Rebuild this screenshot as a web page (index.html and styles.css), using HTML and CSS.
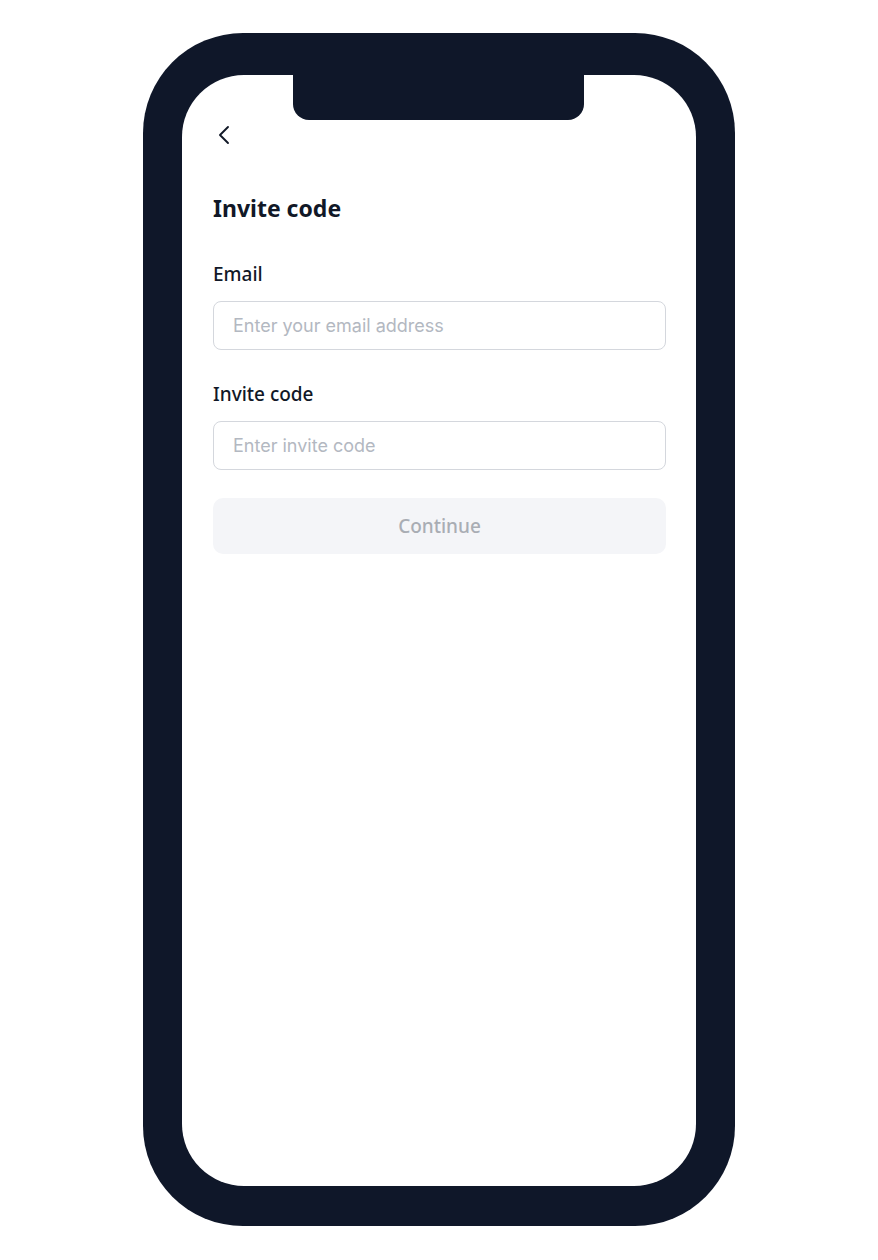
FILE: index.html
```html
<!DOCTYPE html>
<html>

<head>
  <meta http-equiv="Content-Type" content="text/html; charset=UTF-8" />
  <meta name="viewport" content="width=device-width,initial-scale=1.0" />
  <link rel="stylesheet" href="styles.css">
</head>

<body>
  <div class="phone">
    <div class="screen">
      <div class="notch"></div>
      <div class="content">
        <button class="back-btn" aria-label="Back">
          <svg width="14" height="20" viewBox="0 0 14 20" fill="none">
            <path d="M11 2 L3 10 L11 18" stroke="#111827" stroke-width="1.9" stroke-linecap="round" stroke-linejoin="round" />
          </svg>
        </button>
        <h1 class="title">Invite code</h1>
        <form class="form">
          <label class="field">
            <span class="field-label">Email</span>
            <input class="field-input" type="email" placeholder="Enter your email address">
          </label>
          <label class="field">
            <span class="field-label">Invite code</span>
            <input class="field-input" type="text" placeholder="Enter invite code">
          </label>
          <button class="continue-btn" type="button" disabled>Continue</button>
        </form>
      </div>
    </div>
  </div>
</body>

</html>
```

FILE: styles.css
```css
html {
  height: 100%;
}

body {
  margin: 0;
  background-color: #fff;
  font-family: "Noto Sans", "Open Sans", sans-serif;
  color: #111827;
}

.phone {
  width: 592px;
  height: 1193px;
  margin: 33px auto 0 auto;
  box-sizing: border-box;
  padding: 42px 39px 40px 39px;
  background-color: #0f1729;
  border-radius: 100px;
}

.screen {
  position: relative;
  height: 100%;
  background-color: #fff;
  border-radius: 62px;
  overflow: hidden;
}

/* notch sits over the screen */
.notch {
  position: absolute;
  top: 0;
  left: 111px;
  width: 291px;
  height: 45px;
  background-color: #0f1729;
  border-radius: 0 0 16px 16px;
}

.content {
  padding: 50px 30px 0 31px;
}

.back-btn {
  display: flex;
  padding: 0;
  margin: 0 0 0 4px;
  border: none;
  background: none;
  height: 20px;
}

.title {
  margin: 48px 0 0 0;
  font-size: 23px;
  font-weight: 700;
  line-height: 30px;
}

.form {
  margin-top: 38px;
  display: flex;
  flex-direction: column;
}

.field {
  display: flex;
  flex-direction: column;
  margin-bottom: 31px;
}

.field-label {
  font-size: 19px;
  font-weight: 500;
  line-height: 26px;
  margin-bottom: 14px;
}

.field-input {
  height: 49px;
  box-sizing: border-box;
  border: 1px solid #d4d7dd;
  border-radius: 8px;
  padding: 0 19px;
  font-family: Inter, "Noto Sans", sans-serif;
  font-size: 18px;
  color: #111827;
  outline: none;
}

.field-input::placeholder {
  color: #b3b8c1;
}

.continue-btn {
  margin-top: -3px;
  height: 56px;
  border: none;
  border-radius: 10px;
  background-color: #f4f5f8;
  font-family: "Noto Sans", sans-serif;
  font-size: 19px;
  font-weight: 500;
  color: #a9adb4;
}
```
